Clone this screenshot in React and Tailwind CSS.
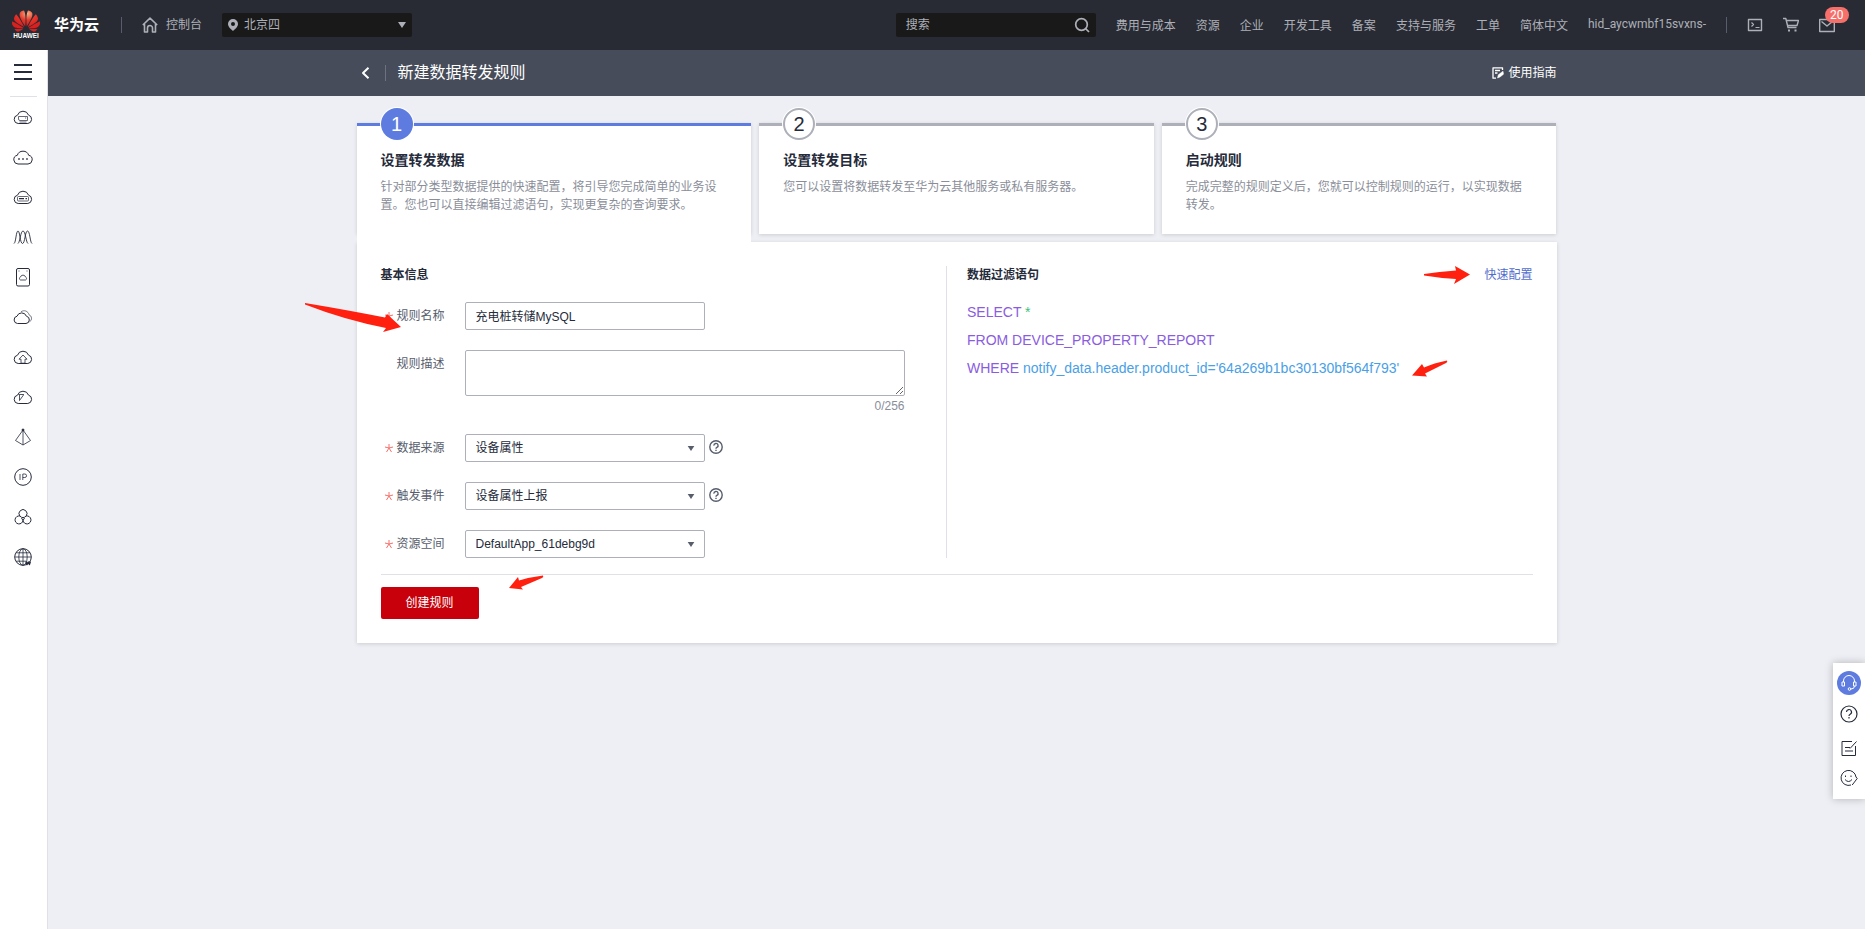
import { useState } from 'react'
import { SiHuawei } from 'react-icons/si'

const navLinks = ['费用与成本', '资源', '企业', '开发工具', '备案', '支持与服务', '工单', '简体中文']

const steps = [
  {
    title: '设置转发数据',
    text: '针对部分类型数据提供的快速配置，将引导您完成简单的业务设置。您也可以直接编辑过滤语句，实现更复杂的查询要求。',
  },
  { title: '设置转发目标', text: '您可以设置将数据转发至华为云其他服务或私有服务器。' },
  { title: '启动规则', text: '完成完整的规则定义后，您就可以控制规则的运行，以实现数据转发。' },
]

const cloud = 'M5.2 16.500a4.200 4.200 0 0 1-.7-8.300 5.800 5.800 0 0 1 11-0.100 4.300 4.300 0 0 1-.7 8.400z'

const services = [
  { name: '弹性云服务器', icon: <><path d={cloud} /><path d="M5.500 9.500h9v4H7a1.500 1.500 0 0 1-1.500-1.500zM6.500 15h7M12 11h1.200" strokeWidth="0.7" /></> },
  { name: '云耀云服务器', icon: <><path d="M5 17a4.400 4.400 0 0 1-.7-8.700 6 6 0 0 1 11.400 0 4.400 4.400 0 0 1-.7 8.700z" /><path d="M5.200 12h1.600M9.200 12h1.600M13.200 12h1.600" strokeWidth="1.600" /></> },
  { name: '裸金属服务器', icon: <><path d={cloud} /><rect x="4.500" y="9.500" width="11" height="4.500" rx="1" strokeWidth="0.7" /><path d="M6 11.700h5M12.500 11.700h1.500" strokeWidth="1.200" /></> },
  { name: '弹性伸缩', icon: <path d="M1 16.500c2-1 2-12.500 4-12.500s2 12.500 4.500 12.500S12 4 14.500 4 17 15.500 19 16.500M5 16.500c2-1 2.500-12.500 5-12.500s3 11.500 5 12.500" strokeWidth="0.9" /> },
  { name: '云硬盘', icon: <><rect x="3.500" y="1.500" width="13" height="17.500" rx="1.500" /><path d="M7.500 13a1.600 1.600 0 0 1 0-3 2.600 2.600 0 0 1 5 0 1.600 1.600 0 0 1 0 3zM5.500 4h1M13.500 4h1" strokeWidth="0.8" /></> },
  { name: '专属云', icon: <><path d="M4.500 16.500a3.700 3.700 0 0 1-.5-7.300 5 5 0 0 1 9.400 0 3.700 3.700 0 0 1-.4 7.300z" /><path d="M8 4.800a5 5 0 0 1 8 3 3.800 3.800 0 0 1 .5 7" strokeWidth="0.6" /></> },
  { name: '云备份', icon: <><path d={cloud} /><path d="M10 8l4 4.200h-2v4H8v-4H6z" strokeWidth="0.8" /></> },
  { name: '函数服务', icon: <><path d={cloud} /><path d="M5.500 7.500h5.500M6.500 8v5.500L10.500 8" strokeWidth="0.8" /></> },
  { name: '虚拟私有云', icon: <><path d="M10 3L2.500 13.500 10 18l7.500-4.500zM10 3v15" strokeWidth="0.8" /><circle cx="10" cy="3" r="1" fill="currentColor" /></> },
  { name: '弹性公网IP', icon: <><circle cx="10" cy="10" r="8.300" /><path d="M7 7v6M9.800 13V7h2a1.700 1.700 0 0 1 0 3.500h-2" strokeWidth="0.8" /></> },
  { name: '区块链', icon: <path d="M6.800 9A4 4 0 1 1 13.200 9A4 4 0 1 1 10 13.500A4 4 0 1 1 6.800 9zM10 13.500l-1.500-2.500M10 13.500l1.500-2.500M6.800 9q1.500 1.600 3.200 1.600T13.200 9" /> },
  { name: '域名注册', icon: <><circle cx="10" cy="10" r="8.300" /><ellipse cx="10" cy="10" rx="4.200" ry="8.300" strokeWidth="0.8" /><path d="M10 2v16M2 10h16M3 5.800h14M3 14.200h10" strokeWidth="0.8" /><path d="M13 14.500l1 3 1.200-2.500 1.200 2.500 1-3" strokeWidth="1.400" /></> },
]

function Icon({ className, children, stroke = 1, size = 20 }) {
  return (
    <svg
      className={className}
      viewBox={`0 0 ${size} ${size}`}
      fill="none"
      stroke="currentColor"
      strokeWidth={stroke}
      strokeLinejoin="round"
      aria-hidden="true"
    >
      {children}
    </svg>
  )
}

function Caret({ className }) {
  return (
    <svg className={className} viewBox="0 0 8 6" fill="currentColor" aria-hidden="true">
      <path d="M0 0h8L4 6z" />
    </svg>
  )
}

function Logo() {
  return (
    <a href="#home" className="flex items-center gap-4" aria-label="华为云">
      <span className="flex w-6 flex-col items-center">
        <svg width="0" height="0" className="absolute">
          <radialGradient id="petal" cx="0.55" cy="0.15" r="0.6">
            <stop offset="0" stopColor="#f7b183" />
            <stop offset="0.5" stopColor="#e8382c" />
            <stop offset="1" stopColor="#d8201f" />
          </radialGradient>
        </svg>
        <SiHuawei className="-my-1 size-7 shrink-0" fill="url(#petal)" />
        <svg className="h-2 w-7 shrink-0" viewBox="0 0 28 8">
          <text x="14" y="6.500" textAnchor="middle" fill="#fff" fontWeight="700" fontSize="6.400">HUAWEI</text>
        </svg>
      </span>
      <span className="text-[15px] font-bold text-white">华为云</span>
    </a>
  )
}

function Header() {
  return (
    <header className="flex h-[50px] items-center bg-[#282b33] pr-[30px] pl-3.5 text-xs whitespace-nowrap text-[#adb0b8]">
      <Logo />
      <span className="ml-[22px] h-4 w-px bg-[#575d6c]" />
      <a href="#console" className="ml-5 flex items-center gap-2">
        <Icon className="size-4" size={16} stroke={1.6}>
          <path d="M.8 8L8 1.200 15.200 8M2.500 7v8h3v-4a2.500 2.500 0 0 1 5 0v4h3V7" />
        </Icon>
        控制台
      </a>
      <div className="relative ml-5 flex h-6 w-[190px] items-center rounded-xs bg-[#191919]">
        <svg className="pointer-events-none absolute left-1.5 h-3 w-2.5" viewBox="0 0 10 12" fill="currentColor" aria-hidden="true">
          <path fillRule="evenodd" d="M5 0a5 5 0 0 1 5 5c0 3-3 5-5 7-2-2-5-4-5-7a5 5 0 0 1 5-5zm0 3a2 2 0 1 0 0 4 2 2 0 0 0 0-4z" />
        </svg>
        <select aria-label="区域" className="h-full w-full appearance-none pl-[22px] outline-none">
          <option>北京四</option>
        </select>
        <Caret className="pointer-events-none absolute right-1.5 h-1.5 w-2" />
      </div>
      <div className="ml-auto flex h-6 w-[200px] items-center rounded-xs bg-[#191919] pr-1.5 pl-2.5">
        <input aria-label="搜索" placeholder="搜索" className="min-w-0 flex-1 outline-none placeholder:text-[#adb0b8]" />
        <button aria-label="搜索">
          <Icon className="size-4" size={16} stroke={1.7}>
            <circle cx="7.500" cy="7.500" r="5.800" />
            <path d="M11.500 11.500l3.500 3.500" />
          </Icon>
        </button>
      </div>
      <nav className="ml-5 flex items-center gap-5">
        {navLinks.map((label) => (
          <a key={label} href={`#${label}`} className="pt-0.5">{label}</a>
        ))}
        <a href="#account" className="pb-0.5 font-[Roboto]">hid_aycwmbf15svxns-</a>
      </nav>
      <span className="ml-5 h-4 w-px bg-[#575d6c]" />
      <div className="ml-5 flex items-center gap-5">
        <button aria-label="CloudShell">
          <Icon className="size-4" size={16} stroke={1.2}>
            <rect x="1.500" y="2.500" width="13" height="11" strokeWidth="1.400" />
            <path d="M4.500 5.500l2 2-2 2M8.500 10.500h4" />
          </Icon>
        </button>
        <button aria-label="购物车">
          <Icon className="size-4" size={16} stroke={1.4}>
            <path d="M0 1.500h2.800l2.200 9h8.500M3.500 3.500h12L14 8.500H4.500" />
            <path d="M5 13.500h2M11.500 13.500h2" strokeWidth="1.800" />
          </Icon>
        </button>
        <button aria-label="消息" className="relative">
          <Icon className="size-4" size={16} stroke={1.4}>
            <rect x="0.700" y="2.500" width="14.600" height="12" />
            <path d="M2.500 4.500L8 9l5.500-4.500" />
          </Icon>
          <span className="absolute -top-2.5 left-1.5 rounded-full bg-[#f66f6a] px-[5px] font-[Roboto] leading-4 text-white">20</span>
        </button>
      </div>
    </header>
  )
}

function Sidebar() {
  return (
    <aside className="flex w-12 shrink-0 flex-col items-center border-r border-[#dfe1e6] bg-white pr-px text-[#252b3a]">
      <button aria-label="服务列表" className="flex h-11 w-[18px] items-center">
        <svg className="h-4 w-[18px]" viewBox="0 0 18 16" fill="currentColor" aria-hidden="true">
          <path d="M0 0h18v2H0zM0 7h18v2H0zM0 14h18v2H0z" />
        </svg>
      </button>
      <span className="mt-0.5 h-px w-[27px] bg-[#dfe1e6]" />
      <nav className="flex flex-col">
        {services.map((s) => (
          <a key={s.name} href={`#${s.name}`} aria-label={s.name} className="flex h-10 items-center">
            <Icon className="size-5">{s.icon}</Icon>
          </a>
        ))}
      </nav>
    </aside>
  )
}

function Steps() {
  return (
    <ol className="grid grid-cols-3 gap-2">
      {steps.map((step, i) => {
        const active = i === 0
        return (
          <li
            key={step.title}
            className={`relative h-[111px] border-t-3 bg-white px-6 pt-6 shadow-[0_1px_4px_rgba(0,0,0,0.14)] ${
              active ? 'border-[#5e7ce0]' : 'border-[#adb0b8]'
            }`}
          >
            <span
              className={`absolute -top-[18px] left-6 flex size-8 items-center justify-center rounded-full text-xl ring-1 ring-white ${
                active ? 'bg-[#5e7ce0] text-white' : 'border-2 border-[#adb0b8] bg-white text-[#252b3a]'
              }`}
            >
              {i + 1}
            </span>
            <h2 className="text-sm font-bold text-[#252b3a]">{step.title}</h2>
            <p className="mt-2 text-xs leading-[18px] text-[#8a8e99]">{step.text}</p>
            {/* joins the active step to the panel below */}
            {active && <span className="absolute inset-x-0 top-full z-10 h-2 bg-white" />}
          </li>
        )
      })}
    </ol>
  )
}

function Field({ id, label, required, children, help }) {
  return (
    <div className="flex items-start">
      <label htmlFor={id} className="flex h-7 w-[84px] shrink-0 items-center pl-1 text-[#575d6c]">
        <span className="w-3 text-[#f66f6a]">
          {required && (
            <Icon className="size-2" size={8}>
              <path d="M4 0v4M0 3l4 1 4-1M1.500 8L4 4l2.500 4" />
            </Icon>
          )}
        </span>
        {label}
      </label>
      {children}
      {help && (
        <button type="button" aria-label="帮助" className="mt-1.5 ml-1 text-[#575d6c]">
          <Icon className="size-3.5" size={14} stroke={1.4}>
            <circle cx="7" cy="7" r="6.200" />
            <path d="M4.900 5.600a2.100 2.100 0 1 1 3 1.800c-.6.300-.9.600-.9 1.300M7 9.700v1.300" />
          </Icon>
        </button>
      )}
    </div>
  )
}

function Select({ id, value }) {
  return (
    <div className="relative flex h-7 w-60 items-center">
      <select id={id} className="h-full w-full appearance-none rounded-xs border border-[#adb0b8] px-2.5 text-[#252b3a] outline-none">
        <option>{value}</option>
      </select>
      <Caret className="pointer-events-none absolute right-2.5 h-[5px] w-2 text-[#575d6c]" />
    </div>
  )
}

function Arrow({ className, viewBox, d }) {
  return (
    <svg className={`pointer-events-none absolute ${className}`} viewBox={viewBox} fill="#ff2010" aria-hidden="true">
      <path d={d} />
    </svg>
  )
}

function RuleForm() {
  const [name, setName] = useState('充电桩转储MySQL')
  const [desc, setDesc] = useState('')

  return (
    <form className="relative mt-2 bg-white p-6 text-xs shadow-[0_1px_4px_rgba(0,0,0,0.14)]">
      <div className="flex">
        <section className="flex flex-1 flex-col gap-5 border-r border-[#dfe1e6]">
          <h3 className="h-4 leading-[18px] font-bold text-[#252b3a]">基本信息</h3>
          <Field id="name" label="规则名称" required>
            <input
              id="name"
              value={name}
              onChange={(e) => setName(e.target.value)}
              className="h-7 w-60 rounded-xs border border-[#adb0b8] px-2.5 pb-0.5 text-[#252b3a] outline-none"
            />
          </Field>
          <Field id="desc" label="规则描述">
            <div className="flex w-[440px] flex-col">
              <textarea
                id="desc"
                value={desc}
                maxLength={256}
                onChange={(e) => setDesc(e.target.value)}
                className="h-[46px] rounded-xs border border-[#adb0b8] px-2.5 py-1 text-[#252b3a] outline-none"
              />
              <span className="mt-0.5 text-right leading-4 text-[#8a8e99]">{desc.length}/256</span>
            </div>
          </Field>
          <Field id="source" label="数据来源" required help>
            <Select id="source" value="设备属性" />
          </Field>
          <Field id="event" label="触发事件" required help>
            <Select id="event" value="设备属性上报" />
          </Field>
          <Field id="space" label="资源空间" required>
            <Select id="space" value="DefaultApp_61debg9d" />
          </Field>
        </section>
        <section className="flex-1 pl-5">
          <div className="flex h-4 justify-between leading-[18px]">
            <h3 className="font-bold text-[#252b3a]">数据过滤语句</h3>
            <a href="#quick" className="text-[#526ecc]">快速配置</a>
          </div>
          <div className="mt-4 text-sm leading-7 text-[#8a5ce0]">
            <p>SELECT <span className="text-[#3dbf7c]">*</span></p>
            <p>FROM DEVICE_PROPERTY_REPORT</p>
            <p>WHERE <span className="text-[#4a9fe6]">notify_data.header.product_id='64a269b1bc30130bf564f793'</span></p>
          </div>
        </section>
      </div>
      <div className="mt-4 border-t border-[#dfe1e6] pt-3">
        <button type="button" className="h-8 rounded-xs bg-[#c7000b] px-[25px] text-white">创建规则</button>
      </div>

      <Arrow className="top-[61px] -left-[52px] h-[30px] w-24" viewBox="0 0 96 30" d="M0 0Q42 7 80 14.500L82 11 96 24 78 29 81 25Q40 17 0 1.500z" />
      <Arrow className="top-6 right-[87px] h-[18px] w-[46px]" viewBox="0 0 46 18" d="M0 8Q15 5.500 32 4.500L31 0 46 8.500 30 18 32 13Q15 12 0 9.500z" />
      <Arrow className="top-[118px] right-[109px] h-[18px] w-9" viewBox="0 0 36 18" d="M35 0.500Q36 2 34 3L13 13.500 15 16.500 0 15.500 10 4 12 7.500Q22 3 35 0.500z" />
      <Arrow className="top-[333px] left-[152px] h-[15px] w-[35px]" viewBox="0 0 35 15" d="M34 .5Q35 2 33 3L12 12 14 14.500 0 13 9 2 10 5.500Q22 2 34 .5z" />
    </form>
  )
}

function HelpDock() {
  return (
    <div className="fixed right-0 bottom-[130px] flex w-8 flex-col items-center bg-white py-2 text-[#252b3a] shadow-[0_0_8px_rgba(0,0,0,0.25)]">
      <button aria-label="在线客服" className="flex size-6 items-center justify-center rounded-full bg-[#5e7ce0] text-white">
        <Icon className="size-4" size={16}>
          <path d="M2.500 7V6a5.500 5.500 0 0 1 11 0v1M13.500 11q0 3-3.500 3M3.500 7H1v4h2.500zM12.500 7H15v4h-2.500z" />
          <circle cx="8.500" cy="14" r="1.300" />
        </Icon>
      </button>
      <button aria-label="帮助" className="mt-2.5">
        <Icon className="size-[18px]" size={18} stroke={1.2}>
          <circle cx="9" cy="9" r="8" />
          <path d="M6.500 7a2.500 2.500 0 1 1 3.700 2.200c-.8.500-1.200.8-1.200 1.800M9 12v1.500" />
        </Icon>
      </button>
      <button aria-label="反馈" className="mt-4">
        <Icon className="size-[18px]" size={18}>
          <path d="M12 2.500H2V16.500h13.500V7M5 8.500h5M5 12h8M10 9.500l6.500-7" />
        </Icon>
      </button>
      <button aria-label="评价" className="mt-3 mb-1">
        <Icon className="size-[18px]" size={18}>
          <path d="M16 8A7.500 7.500 0 1 0 11 16M16 8l1.200 1.500-5 6.500M5 10.500q3.500 4 7 0M5.500 6.500v1.500M11 6.500v1.500" />
        </Icon>
      </button>
    </div>
  )
}

export default function App() {
  return (
    <div className="flex min-h-screen flex-col bg-[#eeeff4] font-['Liberation_Sans','Noto_Sans_CJK_SC',sans-serif]">
      <Header />
      <div className="flex flex-1">
        <Sidebar />
        <main className="min-w-0 flex-1">
          <div className="bg-[#464c59] text-white">
            <div className="mx-auto flex h-[46px] max-w-[1200px] items-center">
              <button aria-label="返回" className="ml-1">
                <Icon className="size-3" size={12} stroke={2}>
                  <path d="M7.500 .8L2 6l5.500 5.200" />
                </Icon>
              </button>
              <span className="ml-3 h-4 w-px bg-[#6c7280]" />
              <h1 className="ml-3 text-base">新建数据转发规则</h1>
              <a href="#guide" className="ml-auto flex items-center gap-1 text-xs">
                <Icon className="size-3" size={12} stroke={1.3}>
                  <path d="M10.500 3V.8H1v10.400h3M3 3.500h5M3 6h2.500" />
                  <path d="M5.500 11l.8-3.200L11 4.200l.5 3L8 10z" fill="currentColor" strokeWidth="0.5" />
                </Icon>
                使用指南
              </a>
            </div>
          </div>
          <div className="mx-auto max-w-[1200px] pt-[27px] pb-10">
            <Steps />
            <RuleForm />
          </div>
        </main>
      </div>
      <HelpDock />
    </div>
  )
}
